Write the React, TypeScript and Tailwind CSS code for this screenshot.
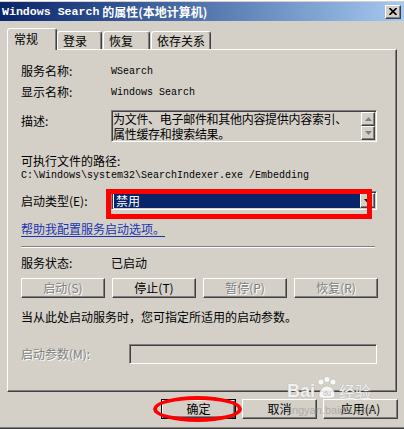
import React from "react";

// classic win32 bevels
const raised =
  "border border-t-white border-l-white border-r-[#404040] border-b-[#404040] shadow-[inset_-1px_-1px_0_#808080]";
const sunken =
  "border border-t-[#808080] border-l-[#808080] border-r-white border-b-white shadow-[inset_1px_1px_0_#404040,inset_-1px_-1px_0_#d4d0c8]";
const disabled = "text-[#808080] [text-shadow:1px_1px_0_#fff]";
const mono = "[font-family:'Liberation_Mono',monospace] text-[10px]";

type Btn = { label: string; enabled?: boolean };

const serviceButtons: Btn[] = [
  { label: "启动(S)" },
  { label: "停止(T)", enabled: true },
  { label: "暂停(P)" },
  { label: "恢复(R)" },
];

const tabs = [
  { label: "登录", w: "w-[45px]" },
  { label: "恢复", w: "w-[47px]" },
  { label: "依存关系", w: "w-[60px]" },
];

const Arrow: React.FC<{ up?: boolean; color?: string }> = ({ up, color = "#808080" }) => (
  <svg width="7" height="4" viewBox="0 0 7 4">
    <polygon points={up ? "3.5,0 7,4 0,4" : "0,0 7,0 3.5,4"} fill={color} />
  </svg>
);

const Watermark: React.FC = () => (
  <div className="absolute left-[287px] top-[372px] flex flex-col pointer-events-none">
    <div className="flex items-end h-[28px]">
      <span className="text-[18px] leading-[18px] font-bold text-white/85 [font-family:'Liberation_Sans',sans-serif] [text-shadow:0_0_1px_#9a9a9a]">
        Bai
      </span>
      <svg width="22" height="24" viewBox="0 0 22 24" className="mx-[1px] opacity-85">
        <circle cx="5" cy="6" r="3" fill="#fff" stroke="#b0b0b0" strokeWidth="0.5" />
        <circle cx="11" cy="3.5" r="3" fill="#fff" stroke="#b0b0b0" strokeWidth="0.5" />
        <circle cx="17" cy="6" r="3" fill="#fff" stroke="#b0b0b0" strokeWidth="0.5" />
        <path d="M3 19 Q4 11 11 10 Q18 11 19 19 Q19 23 11 22 Q3 23 3 19Z" fill="#fff" stroke="#b0b0b0" strokeWidth="0.5" />
        <text x="7" y="20" fontSize="7" fill="#b0b0b0" fontFamily="Liberation Sans">du</text>
      </svg>
      <span className="text-[16px] leading-[18px] text-white/85 [text-shadow:0_0_1px_#9a9a9a]">经验</span>
    </div>
    <span className="text-[11px] leading-[13px] mt-[4px] text-[#9a9a9a]/70 [font-family:'Liberation_Sans',sans-serif]">
      jingyan.baidu.com
    </span>
  </div>
);

const App: React.FC = () => {
  return (
    <div className="w-[404px] h-[429px] bg-[#d4d0c8] relative overflow-hidden flex flex-col text-[12px] text-black [font-family:'Noto_Sans_CJK_SC','Noto_Sans',sans-serif]">
      <div className="h-[2px] border-t border-white" />

      {/* title bar */}
      <div className="h-[19px] flex items-center justify-between bg-linear-to-r from-[#0a246a] to-[#a6caf0] pl-[2px] pr-[3px]">
        <div className="flex items-center text-white font-bold leading-[19px] whitespace-nowrap">
          <span className="[font-family:'Liberation_Mono',monospace] text-[11.6px]">Windows Search </span>
          <span className="text-[12px]">&nbsp;的属性(本地计算机)</span>
        </div>
        <div className={`w-[16px] h-[14px] bg-[#d4d0c8] flex items-center justify-center ${raised}`}>
          <svg width="8" height="7" viewBox="0 0 8 7">
            <path d="M0.5 0 L7.5 7 M7.5 0 L0.5 7" stroke="#000" strokeWidth="1.6" />
          </svg>
        </div>
      </div>

      {/* tabs */}
      <div className="mt-[7px] h-[21px] flex items-end pl-[7px] relative z-10">
        <div className="w-[50px] h-[22px] -mb-[1px] bg-[#d4d0c8] border-l border-t border-white border-r border-r-[#404040] shadow-[inset_-1px_0_0_#808080] rounded-t-[3px] pl-[6px] leading-[20px]">
          常规
        </div>
        {tabs.map((t, i) => (
          <div
            key={t.label}
            className={`${t.w} h-[18px] ${i > 0 ? "ml-[1px]" : ""} border-l border-t border-white border-r border-r-[#404040] shadow-[inset_-1px_0_0_#808080] rounded-t-[3px] pl-[5px] leading-[18px] whitespace-nowrap`}
          >
            {t.label}
          </div>
        ))}
      </div>

      {/* tab panel */}
      <div className={`mx-[7px] h-[343px] pl-[13px] flex flex-col ${raised}`}>
        <div className="mt-[12px] h-[18px] flex items-center">
          <span className="w-[90px]">服务名称:</span>
          <span className={mono}>WSearch</span>
        </div>
        <div className="mt-[3px] h-[18px] flex items-center">
          <span className="w-[90px]">显示名称:</span>
          <span className={mono}>Windows Search</span>
        </div>

        <div className="mt-[9px] flex items-start">
          <span className="w-[90px] mt-[3px] leading-[16px]">描述:</span>
          <div className={`w-[266px] h-[32px] flex ${sunken}`}>
            <div className="flex-1 pl-[1px] leading-[15px] text-[12px] tracking-[-0.3px]">
              为文件、电子邮件和其他内容提供内容索引、
              <br />
              属性缓存和搜索结果。
            </div>
            <div className="w-[15px] flex flex-col py-[1px] pr-[1px]">
              <div className={`h-[15px] bg-[#d4d0c8] flex items-center justify-center ${raised}`}>
                <Arrow up />
              </div>
              <div className={`h-[14px] bg-[#d4d0c8] flex items-center justify-center ${raised}`}>
                <Arrow />
              </div>
            </div>
          </div>
        </div>

        <div className="mt-[12px] h-[14px] flex items-center">可执行文件的路径:</div>
        <div className={`h-[14px] flex items-center ${mono}`}>
          C:\Windows\system32\SearchIndexer.exe /Embedding
        </div>

        <div className="mt-[9px] h-[19px] flex items-center">
          <span className="w-[90px]">启动类型(E):</span>
          <div className="relative">
            <div className={`w-[266px] h-[19px] bg-white flex p-[1px] ${sunken}`}>
              <div className="flex-1 ml-[1px] bg-[#0a246a] text-white leading-[15px] pl-[2px]">禁用</div>
              <div className={`w-[15px] bg-[#d4d0c8] flex items-center justify-center ${raised}`}>
                <Arrow color="#000" />
              </div>
            </div>
            <div className="absolute -left-[5px] -top-[2px] w-[266px] h-[30px] border-[5px] border-[#ff0000]" />
          </div>
        </div>

        <div className="mt-[11px] h-[16px] flex items-center">
          <span className="text-[#1a34b0] underline underline-offset-2">帮助我配置服务启动选项。</span>
        </div>

        <div className="mt-[9px] w-[354px] h-[2px] border-t border-[#808080] border-b border-b-white" />

        <div className="mt-[7px] h-[16px] flex items-center">
          <span className="w-[90px]">服务状态:</span>
          <span>已启动</span>
        </div>

        <div className="mt-[7px] w-[357px] h-[20px] grid grid-cols-4 gap-[7px]">
          {serviceButtons.map(b => (
            <div
              key={b.label}
              className={`flex items-center justify-center ${raised} ${b.enabled ? "" : disabled}`}
            >
              {b.label}
            </div>
          ))}
        </div>

        <div className="mt-[11px] h-[16px] flex items-center">
          当从此处启动服务时，您可指定所适用的启动参数。
        </div>

        <div className="mt-[19px] h-[20px] flex items-center">
          <span className={`w-[108px] ${disabled}`}>启动参数(M):</span>
          <div className={`w-[248px] h-[20px] ${sunken}`} />
        </div>
      </div>

      {/* dialog buttons */}
      <div className="mt-[7px] h-[20px] flex justify-end gap-[6px] pr-[6px]">
        <div className="relative">
          <div className="w-[75px] h-[20px] border border-black flex">
            <div className={`flex-1 flex items-center justify-center ${raised}`}>确定</div>
          </div>
          <div className="absolute -left-[8px] -top-[3px] w-[89px] h-[26px] rounded-[50%] border-[4px] border-[#ff0000]" />
        </div>
        <div className={`w-[75px] h-[20px] flex items-center justify-center ${raised}`}>取消</div>
        <div className={`w-[75px] h-[20px] flex items-center justify-center ${raised}`}>应用(A)</div>
      </div>

      <div className="mt-auto h-[2px] bg-[#808080] border-b border-[#404040]" />

      <Watermark />
    </div>
  );
};

export default App;
